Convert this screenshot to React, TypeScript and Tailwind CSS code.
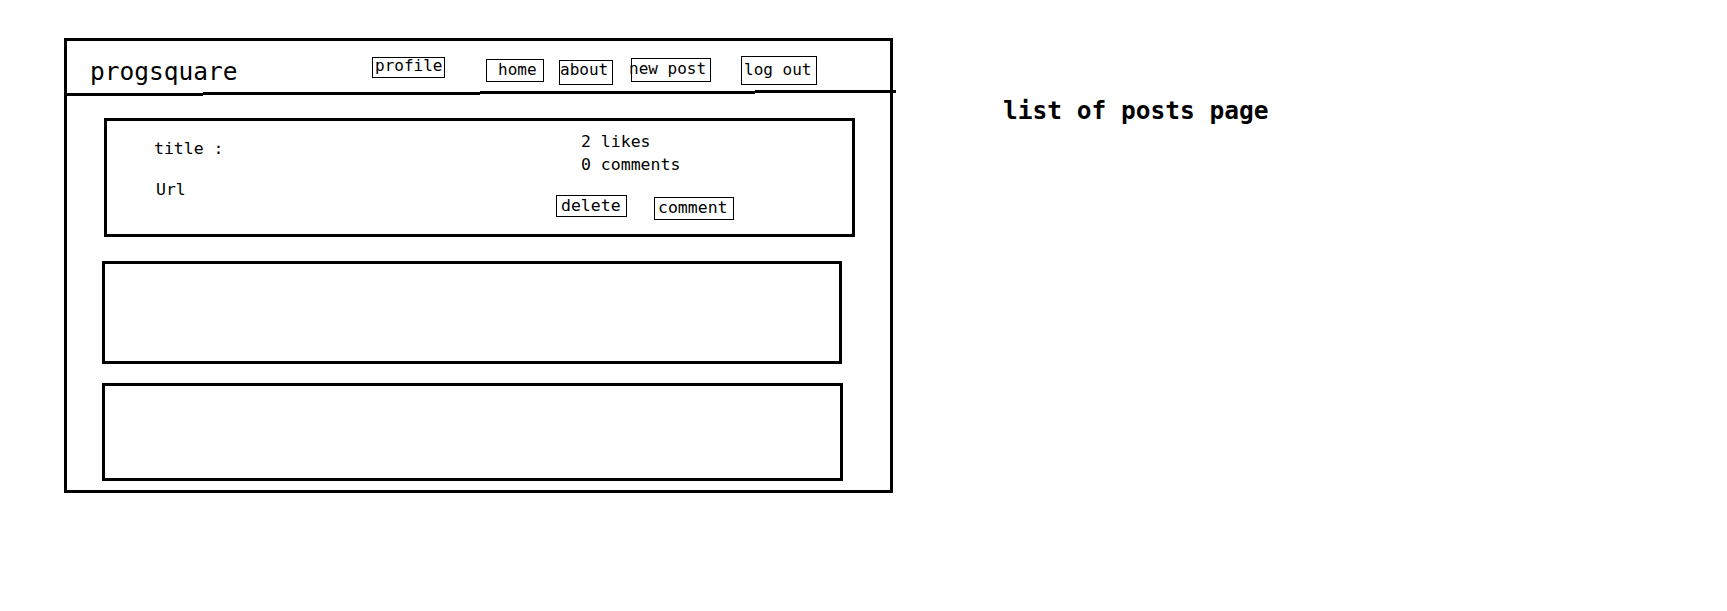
export default function App() {
  return (
    <div className="min-h-[611px] w-full bg-white font-['DejaVu_Sans_Mono',monospace] text-black">
      <div className="flex items-start pt-[38px]">
        {/* wireframe frame */}
        <div className="ml-[64px] flex h-[455px] w-[829px] shrink-0 flex-col border-[3px] border-black">
          {/* header */}
          <div className="flex h-[49px] shrink-0 items-start">
            <div className="w-[305px] shrink-0 pl-[23px] pt-[19px] text-[24.5px] leading-none">progsquare</div>
            <div className="mt-[16px] h-[21px] w-[73px] shrink-0 whitespace-nowrap border border-black pl-[2px] text-[16px] leading-none">
              profile
            </div>
            <div className="ml-[41px] mt-[18px] h-[23px] w-[58px] shrink-0 whitespace-nowrap border border-black pl-[11px] pt-[2px] text-[16px] leading-none">
              home
            </div>
            <div className="ml-[15px] mt-[19px] h-[25px] w-[54px] shrink-0 whitespace-nowrap border border-black pt-[1px] text-[16px] leading-none">
              about
            </div>
            <div className="ml-[18px] mt-[17px] h-[24px] w-[80px] shrink-0 whitespace-nowrap border border-black pt-[2px] text-[16px] leading-none">
              <span className="-ml-[3px]">new post</span>
            </div>
            <div className="ml-[30px] mt-[15px] h-[29px] w-[76px] shrink-0 whitespace-nowrap border border-black pl-[2px] pt-[5px] text-[16px] leading-none">
              log out
            </div>
          </div>

          {/* hand drawn divider */}
          <div className="flex h-[6px] w-[829px] shrink-0 items-start">
            <div className="mt-[3px] h-[3px] w-[136px] shrink-0 bg-black" />
            <div className="mt-[2px] h-[3px] w-[277px] shrink-0 bg-black" />
            <div className="mt-[1px] h-[3px] w-[275px] shrink-0 bg-black" />
            <div className="h-[3px] w-[141px] shrink-0 bg-black" />
          </div>

          {/* post card */}
          <div className="ml-[37px] mt-[22px] flex h-[119px] w-[751px] shrink-0 border-[3px] border-black text-[16.5px] leading-none">
            <div className="w-[449px] shrink-0 pl-[47px] pt-[20px]">
              <div className="whitespace-pre">title :</div>
              <div className="mt-[24px] pl-[2px]">Url</div>
            </div>
            <div className="flex flex-col pt-[13px]">
              <div className="pl-[25px]">2 likes</div>
              <div className="mt-[6px] pl-[25px]">0 comments</div>
              <div className="mt-[22px] flex items-start">
                <div className="h-[22px] w-[71px] shrink-0 border border-black pl-[4px] pt-[2px]">delete</div>
                <div className="ml-[27px] mt-[2px] h-[23px] w-[80px] shrink-0 border border-black pl-[3px] pt-[2px]">comment</div>
              </div>
            </div>
          </div>

          {/* empty post cards */}
          <div className="ml-[35px] mt-[24px] h-[103px] w-[740px] shrink-0 border-[3px] border-black" />
          <div className="ml-[35px] mt-[19px] h-[98px] w-[741px] shrink-0 border-[3px] border-black" />
        </div>

        <h1 className="ml-[110px] mt-[61px] whitespace-nowrap text-[24.5px] font-bold leading-none">list of posts page</h1>
      </div>
    </div>
  )
}
